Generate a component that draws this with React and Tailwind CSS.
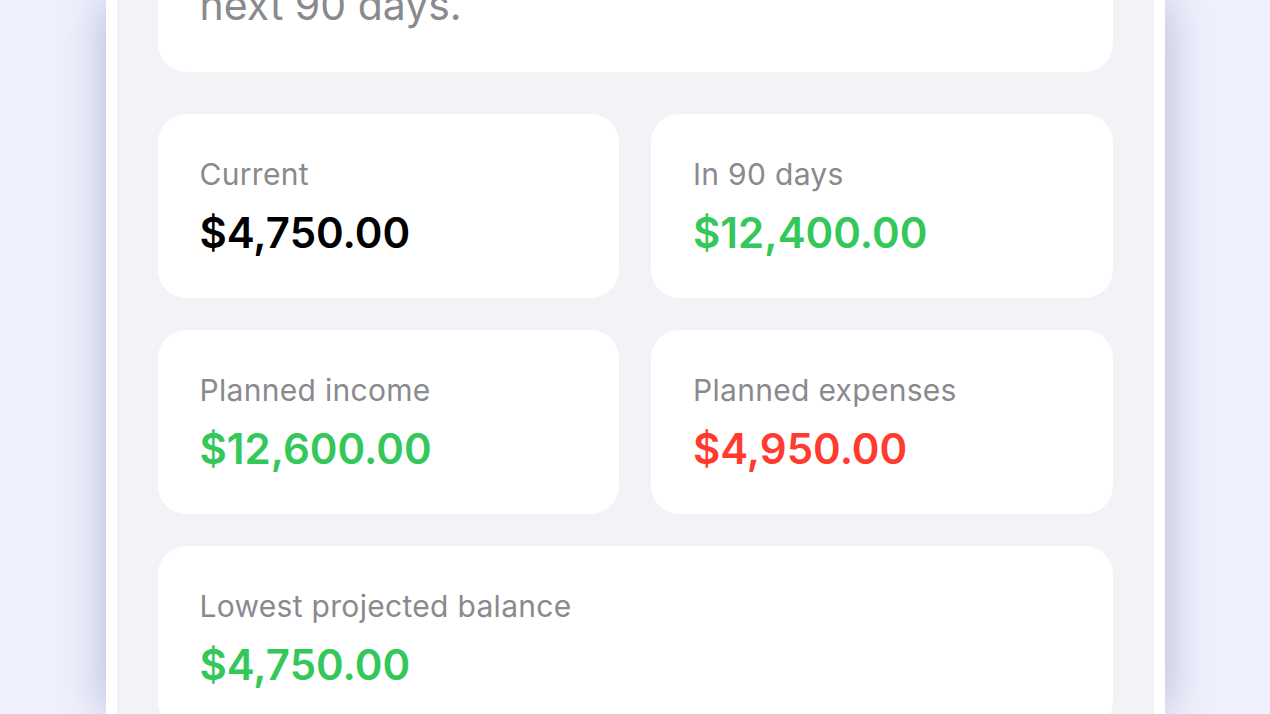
import React from 'react';

const stats = [
  { label: 'Current', value: '$4,750.00', color: 'text-black' },
  { label: 'In 90 days', value: '$12,400.00', color: 'text-[#34c759]' },
  { label: 'Planned income', value: '$12,600.00', color: 'text-[#34c759]' },
  { label: 'Planned expenses', value: '$4,950.00', color: 'text-[#ff3b30]' },
];

function StatCard({ label, value, color }) {
  return (
    <div className="bg-white rounded-[28px] h-[184px] px-[42px] pt-[43px]">
      <div className="text-[30px] leading-[35px] tracking-[0.3px] text-[#8a8a8e]">{label}</div>
      <div className={`mt-[15px] text-[42px] leading-[51px] font-semibold ${color}`}>{value}</div>
    </div>
  );
}

export default function App() {
  return (
    <div className="h-[714px] overflow-hidden bg-[#eff2fd] flex justify-center font-['Inter',sans-serif]">
      <div className="w-[1059px] h-full border-x-[11px] border-white bg-[#f2f2f7] shadow-[0_0_45px_rgba(70,80,140,0.38)]">
        <div className="-mt-[109px] px-[41px] flex flex-col">
          <div className="bg-white rounded-[28px] px-[42px] pt-[42px] pb-[43px]">
            <p className="text-[41px] leading-[48px] text-[#8a8a8e] whitespace-nowrap">
              See your balance over the
              <br />
              next 90 days.
            </p>
          </div>

          <div className="mt-[42px] grid grid-cols-2 gap-[32px]">
            {stats.map((s) => (
              <StatCard key={s.label} {...s} />
            ))}
            <div className="col-span-2">
              <StatCard label="Lowest projected balance" value="$4,750.00" color="text-[#34c759]" />
            </div>
          </div>
        </div>
      </div>
    </div>
  );
}
